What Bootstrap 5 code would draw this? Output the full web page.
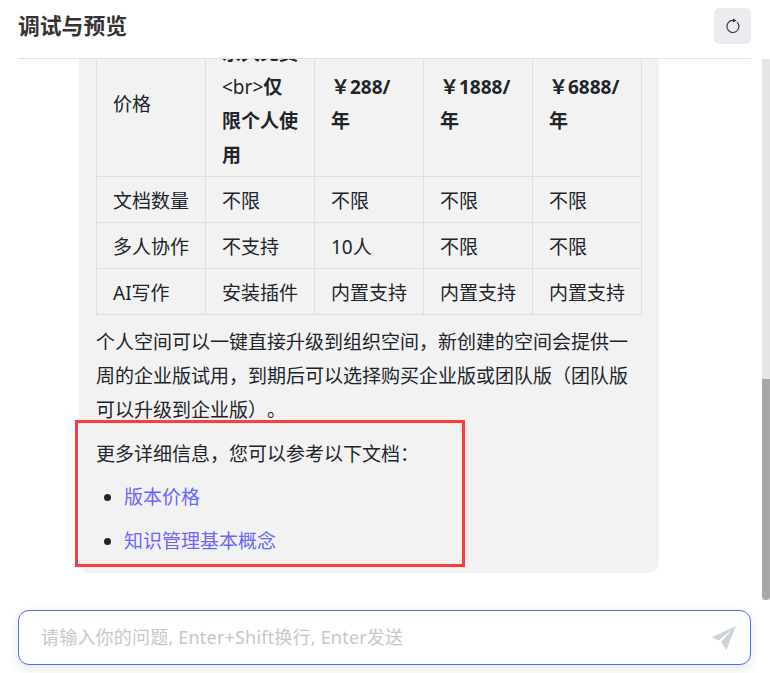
<!DOCTYPE html>
<html lang="zh"><head><meta charset="utf-8">
<link href="https://cdn.jsdelivr.net/npm/bootstrap@5.3.0/dist/css/bootstrap.min.css" rel="stylesheet">
<style>
html,body{height:100%;overflow:hidden;background:#fff}
body{font-family:"Noto Sans","Noto Sans CJK SC",sans-serif;color:#212529;position:relative;text-spacing-trim:space-all}
.pane-wrap{height:673px}
.top-bar{height:59px;margin:0 19px 0 18px;border-bottom:1px solid #e3e3e3;flex:none;padding-bottom:6px}
.top-title{font-size:21.8px;font-weight:700;color:#333;line-height:1}
.reload-btn{width:37px;height:36px;background:#ebecf0;border:0;border-radius:5px;padding:0}
.msg-area{height:551px;overflow:hidden;justify-content:flex-end}
.msg-bubble{margin:0 111px 37px 79px;background:#f2f2f3;border-radius:0 0 10px 10px;padding:0 17px 15px;font-size:19px;line-height:34px}
.price-table{width:546px;table-layout:fixed;border-collapse:collapse;margin:0 0 10px}
.price-table td{border:1px solid #dedede;padding:7px 16px 4px;vertical-align:middle;word-break:break-all}
.msg-bubble p{margin:0 0 10px}
.msg-bubble .lead-in{margin-bottom:9px}
.msg-bubble ul{margin:0;padding-left:28px}
.msg-bubble li{margin-bottom:10px}
.msg-bubble li:last-child{margin-bottom:0}
.msg-bubble a{color:#6b66ff;text-decoration:none}
.input-wrap{margin:0 19px 0 18px;height:55px;border:1px solid #5468ff;border-radius:11px;box-shadow:0 4px 12px rgba(0,0,0,.1);padding:0 14px 0 22px;flex:none;background:#fff}
.input-hint{font-size:18px;color:#c8c8c8;white-space:nowrap;letter-spacing:.2px}
.red-frame{position:absolute;left:75px;top:420px;width:390px;height:147px;border:3px solid #ff3b3b}
.scroll-track{position:absolute;right:0;top:59px;width:8px;height:541px;background:#e6e6e6}
.scroll-thumb{position:absolute;left:0;top:320px;width:8px;height:221px;background:#a8a8a8;border-radius:0 0 4px 4px}
</style></head><body>
<div class="pane-wrap d-flex flex-column">
<div class="top-bar d-flex align-items-center justify-content-between">
<div class="top-title">调试与预览</div>
<button class="reload-btn d-flex align-items-center justify-content-center" type="button" aria-label="刷新">
<svg width="16" height="17" viewBox="0 0 16 17" fill="none"><path d="M8 2.4A6 6 0 1 0 12.3 4.3" stroke="#333" stroke-width="1.1" stroke-linecap="round"/><path d="M8 .4 11.6 2.6 8 4.6Z" fill="#333"/></svg>
</button>
</div>
<div class="msg-area d-flex flex-column">
<div class="msg-bubble">
<table class="price-table"><colgroup><col><col><col><col><col></colgroup>
<tr><td>价格</td><td><b>永久免费</b><br>&lt;br&gt;<b>仅限个人使用</b></td><td><b>￥288/年</b></td><td><b>￥1888/年</b></td><td><b>￥6888/年</b></td></tr>
<tr><td>文档数量</td><td>不限</td><td>不限</td><td>不限</td><td>不限</td></tr>
<tr><td>多人协作</td><td>不支持</td><td>10人</td><td>不限</td><td>不限</td></tr>
<tr><td>AI写作</td><td>安装插件</td><td>内置支持</td><td>内置支持</td><td>内置支持</td></tr>
</table>
<p>个人空间可以一键直接升级到组织空间，新创建的空间会提供一周的企业版试用，到期后可以选择购买企业版或团队版（团队版可以升级到企业版）。</p>
<p class="lead-in">更多详细信息，您可以参考以下文档：</p>
<ul><li><a href="#">版本价格</a></li><li><a href="#">知识管理基本概念</a></li></ul>
</div>
</div>
<div class="input-wrap d-flex align-items-center justify-content-between">
<span class="input-hint">请输入你的问题, Enter+Shift换行, Enter发送</span>
<svg width="24" height="24" viewBox="0 0 24 24"><path d="M24 0 0 11.2 6.6 14.5 20 3.5 9.2 15.8 9.2 16 14.3 24Z" fill="#cdd1d9"/></svg>
</div>
</div>
<div class="red-frame"></div>
<div class="scroll-track"><div class="scroll-thumb"></div></div>
</body></html>
